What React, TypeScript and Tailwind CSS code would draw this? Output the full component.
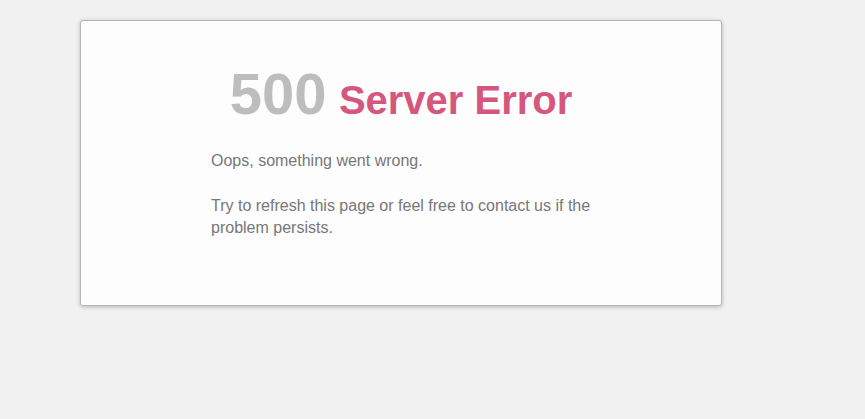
export default function App() {
  return (
    <div className="min-h-screen w-full bg-[#f1f1f1] pt-[20px] pl-[80px]" style={{ fontFamily: '"Liberation Sans", Arial, sans-serif' }}>
      <div className="w-[642px] h-[286px] bg-[#fdfdfd] border border-[#b5b5b5] rounded-[3px] shadow-[0_1px_4px_rgba(0,0,0,0.25)] px-[130px] pt-[44px]">
        <h1 className="text-center font-bold leading-none whitespace-nowrap">
          <span className="text-[58px] text-[#bdbdbd]">500</span>{" "}
          <span className="ml-[8px] text-[40px] text-[#d5577d]">Server Error</span>
        </h1>
        <div className="mt-[27px] text-[16px] leading-[22px] text-[#777777]">
          <p>Oops, something went wrong.</p>
          <p className="mt-[23px]">Try to refresh this page or feel free to contact us if the problem persists.</p>
        </div>
      </div>
    </div>
  );
}
